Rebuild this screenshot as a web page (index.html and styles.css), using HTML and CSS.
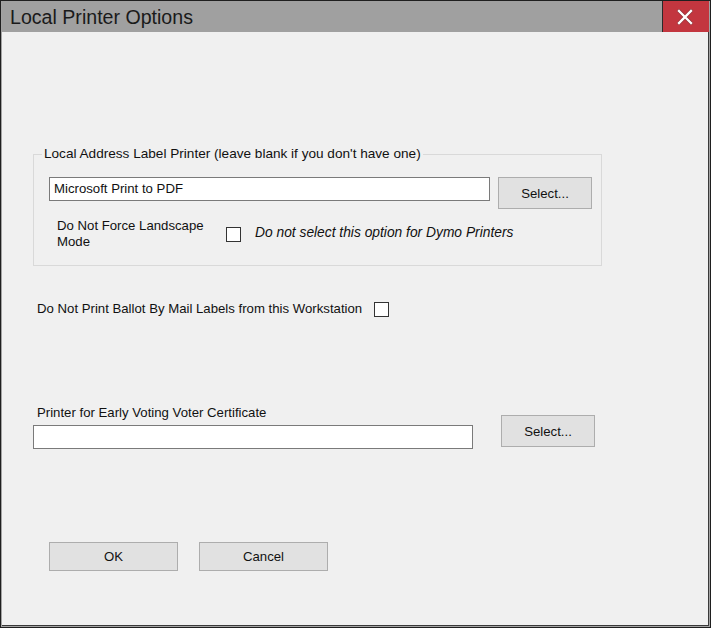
FILE: index.html
```html
<!DOCTYPE html>
<html>
<head>
<meta charset="utf-8">
<title>Local Printer Options</title>
<link rel="stylesheet" href="styles.css">
</head>
<body>
<div class="window">
  <div class="titlebar">
    <span class="title">Local Printer Options</span>
    <div class="close">
      <svg width="16" height="16" viewBox="0 0 16 16">
        <path d="M2 2 L14 14 M14 2 L2 14" stroke="#6a3035" stroke-width="3.6" stroke-linecap="square" opacity="0.55"/>
        <path d="M2 2 L14 14 M14 2 L2 14" stroke="#ffffff" stroke-width="2.3" stroke-linecap="square"/>
      </svg>
    </div>
  </div>
  <div class="client">
    <fieldset class="group">
      <legend>Local Address Label Printer (leave blank if you don't have one)</legend>
      <div class="row r1">
        <div class="textbox tb1">Microsoft Print to PDF</div>
        <div class="btn select1">Select...</div>
      </div>
      <div class="row r2">
        <div class="wrap-label">Do Not Force Landscape Mode</div>
        <span class="check check1"></span>
        <span class="hint">Do not select this option for Dymo Printers</span>
      </div>
    </fieldset>
    <div class="row ballot">
      <span class="text">Do Not Print Ballot By Mail Labels from this Workstation</span>
      <span class="check check2"></span>
    </div>
    <div class="row cert">
      <div class="col">
        <div class="cert-label">Printer for Early Voting Voter Certificate</div>
        <div class="textbox tb2"></div>
      </div>
      <div class="btn select2">Select...</div>
    </div>
    <div class="row actions">
      <div class="btn ok">OK</div>
      <div class="btn cancel">Cancel</div>
    </div>
  </div>
</div>
</body>
</html>
```
FILE: styles.css
```css
html, body {
  margin: 0;
  padding: 0;
  background: #f0f0f0;
}
.window {
  width: 711px;
  height: 628px;
  box-sizing: border-box;
  border: 1px solid #1f1f1f;
  padding: 0 1px 1px 1px;
  background: #a3a3a3;
  display: flex;
  flex-direction: column;
  font-family: "Liberation Sans", Arial, sans-serif;
  font-size: 13.2px;
  color: #111;
}
.titlebar {
  height: 31px;
  flex: none;
  display: flex;
  align-items: center;
  background: #a0a0a0;
}
.title {
  font-size: 19.6px;
  color: #1a1a1a;
  margin-left: 8px;
  margin-top: 1px;
  flex: 1;
}
.close {
  width: 47px;
  height: 31px;
  box-sizing: border-box;
  border-left: 1px solid #2a2a2a;
  background: #c3363f;
  display: flex;
  align-items: center;
  justify-content: center;
}
.close svg {
  display: block;
  margin-left: -2px;
}
.client {
  flex: 1;
  background: #f0f0f0;
  border-right: 1px solid #3a3a3a;
  border-bottom: 1px solid #3a3a3a;
  display: flex;
  flex-direction: column;
  align-items: flex-start;
}
.row {
  display: flex;
}
.group {
  margin: 115px 0 0 31px;
  width: 569px;
  box-sizing: border-box;
  border: 1px solid #d9d9d9;
  padding: 0 0 15px 0;
}
.group legend {
  margin-left: 8px;
  padding: 0 2px;
  line-height: 14px;
  font-size: 13.6px;
}
.textbox {
  background: #fff;
  border: 1px solid #7a7a7a;
  box-sizing: border-box;
  height: 24px;
  line-height: 22px;
  padding-left: 4px;
}
.btn {
  background: #e1e1e1;
  border: 1px solid #adadad;
  box-sizing: border-box;
  display: flex;
  align-items: center;
  justify-content: center;
}
.r1 {
  margin-top: 16px;
  margin-left: 15px;
  align-items: flex-start;
}
.tb1 {
  width: 441px;
}
.select1 {
  width: 94px;
  height: 32px;
  margin-left: 8px;
}
.r2 {
  margin-top: 9px;
  margin-left: 23px;
  align-items: center;
}
.wrap-label {
  width: 160px;
  line-height: 16px;
}
.check {
  width: 15px;
  height: 15px;
  box-sizing: border-box;
  border: 1px solid #333;
  background: #fff;
  flex: none;
}
.check1 {
  margin-left: 9px;
  margin-top: 1px;
}
.hint {
  font-style: italic;
  font-size: 13.8px;
  margin-left: 14px;
  margin-bottom: 3px;
}
.ballot {
  margin-top: 35px;
  margin-left: 35px;
  align-items: center;
  line-height: 16px;
}
.check2 {
  margin-left: 12px;
}
.cert {
  margin-top: 88px;
  margin-left: 31px;
  align-items: flex-start;
}
.col {
  display: flex;
  flex-direction: column;
}
.cert-label {
  line-height: 16px;
  margin-left: 4px;
  margin-bottom: 4px;
}
.tb2 {
  width: 440px;
}
.select2 {
  width: 94px;
  height: 32px;
  margin-left: 28px;
  margin-top: 10px;
}
.actions {
  margin-top: 93px;
  margin-left: 47px;
  gap: 21px;
}
.ok, .cancel {
  width: 129px;
  height: 29px;
}
```
